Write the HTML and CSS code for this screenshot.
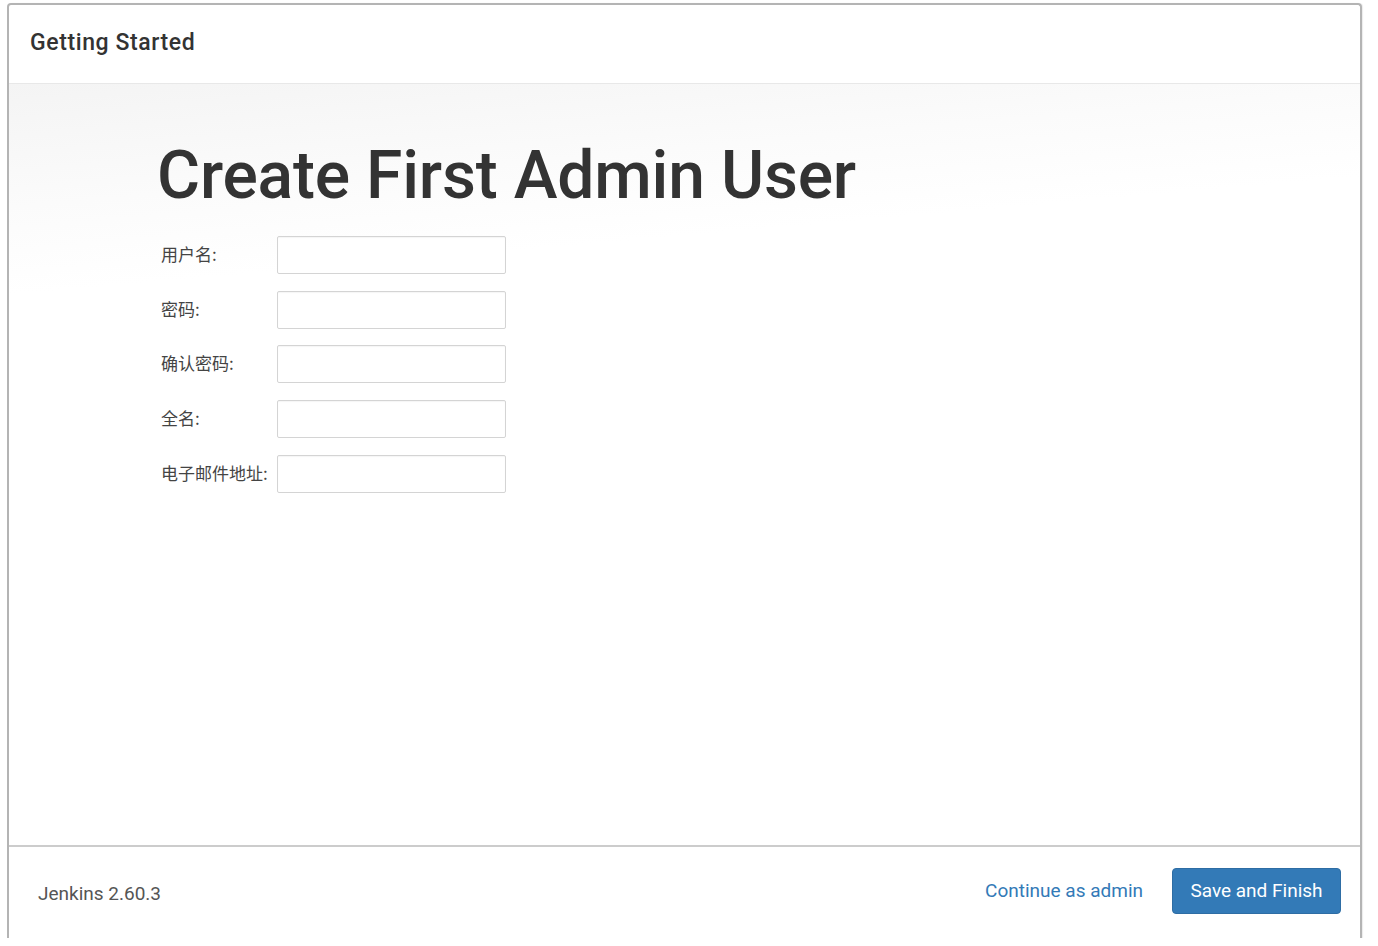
FILE: index.html
```html
<!DOCTYPE html>
<html lang="zh">
<head>
<meta charset="utf-8">
<title>Getting Started</title>
<link rel="stylesheet" href="styles.css">
</head>
<body>
<div class="frame">
  <header class="dlg-header">Getting Started</header>
  <main class="dlg-body">
    <h1 class="title">Create First Admin User</h1>
    <form class="form">
      <div class="row"><label class="lbl">用户名:</label><input class="inp" type="text"></div>
      <div class="row"><label class="lbl">密码:</label><input class="inp" type="password"></div>
      <div class="row"><label class="lbl">确认密码:</label><input class="inp" type="password"></div>
      <div class="row"><label class="lbl">全名:</label><input class="inp" type="text"></div>
      <div class="row"><label class="lbl">电子邮件地址:</label><input class="inp" type="text"></div>
    </form>
  </main>
  <footer class="dlg-footer">
    <span class="version">Jenkins 2.60.3</span>
    <div class="actions">
      <a class="link" href="#">Continue as admin</a>
      <button class="btn" type="button">Save and Finish</button>
    </div>
  </footer>
</div>
</body>
</html>
```

FILE: styles.css
```css
html, body {
  margin: 0;
  padding: 0;
  background: #ffffff;
}
body {
  padding: 3px 0 0 7px;
  font-family: Roboto, "Noto Sans CJK SC", sans-serif;
  color: #333;
}
.frame {
  width: 1355px;
  height: 935px;
  border: 2px solid #b4b4b4;
  border-bottom: none;
  border-radius: 4px 4px 0 0;
  display: flex;
  flex-direction: column;
  box-sizing: border-box;
  box-shadow: 1px 0 1px rgba(0,0,0,0.08);
}
.dlg-header {
  height: 79px;
  flex: none;
  box-sizing: border-box;
  padding: 24px 0 0 21px;
  font-size: 23px;
  font-weight: 500;
  letter-spacing: 0.6px;
  color: #333;
  border-bottom: 1px solid #e8e8e8;
}
.dlg-body {
  flex: 1;
  background: linear-gradient(175deg, #f4f4f4 0%, #fbfbfb 14%, #ffffff 24%);
  padding: 53px 0 0 148px;
}
.title {
  margin: 0 0 21px 0;
  font-size: 66px;
  font-weight: 500;
  line-height: 78px;
  letter-spacing: -0.2px;
  color: #333;
}
.form {
  display: flex;
  flex-direction: column;
  gap: 16.7px;
}
.row {
  display: flex;
  align-items: flex-start;
}
.lbl {
  width: 120px;
  padding: 5px 0 0 4px;
  box-sizing: border-box;
  font-family: "Noto Sans CJK SC", sans-serif;
  font-size: 17px;
  color: #444;
  white-space: nowrap;
}
.inp {
  width: 229px;
  height: 38px;
  box-sizing: border-box;
  border: 1px solid #d4d4d4;
  border-radius: 2px;
  background: #fff;
  margin: 0;
  box-shadow: inset 0 1px 1px rgba(0,0,0,0.04);
}
.dlg-footer {
  height: 93px;
  flex: none;
  box-sizing: border-box;
  border-top: 2px solid #cccccc;
  display: flex;
  align-items: center;
  justify-content: space-between;
  padding: 0 19px 4px 29px;
}
.version {
  font-size: 19px;
  color: #555;
  padding-top: 6px;
}
.actions {
  display: flex;
  align-items: center;
  gap: 29px;
}
.link {
  font-size: 19px;
  color: #337ab7;
  text-decoration: none;
}
.btn {
  width: 169px;
  height: 46px;
  background: #337ab7;
  border: 1px solid #2e6da4;
  border-radius: 4px;
  color: #fff;
  font-family: Roboto, sans-serif;
  font-size: 19px;
  padding: 0;
}
```
